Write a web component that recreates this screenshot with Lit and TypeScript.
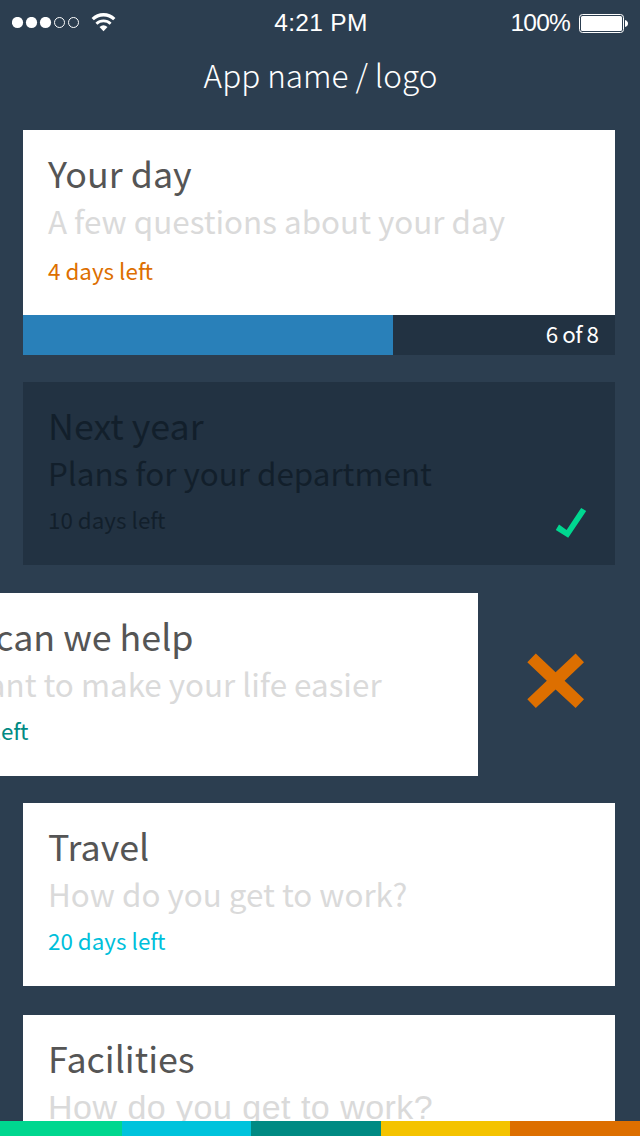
import { LitElement, html, css, nothing } from "lit";
import { customElement, property } from "lit/decorators.js";
import { classMap } from "lit/directives/class-map.js";

@customElement("status-bar")
class StatusBar extends LitElement {
  static styles = css`
    :host {
      display: grid;
      grid-template-columns: 1fr auto 1fr;
      height: 46px;
      padding: 0 12px;
      box-sizing: border-box;
      align-items: center;
      color: #fff;
      font: 24.5px/46px "Liberation Sans", Arial, sans-serif;
    }
    svg {
      display: block;
    }
    .left,
    .right {
      display: flex;
      align-items: center;
    }
    .left {
      gap: 12px;
    }
    .right {
      justify-content: flex-end;
      gap: 9px;
    }
    .time {
      letter-spacing: 0.3px;
      padding-left: 2px;
    }
    .level {
      letter-spacing: -0.8px;
    }
  `;
  render() {
    return html`
      <div class="left">
        <svg width="67" height="12" viewBox="0 0 67 12" fill="#fff">
          <circle cx="5.5" cy="5.5" r="5.6" />
          <circle cx="19.5" cy="5.5" r="5.6" />
          <circle cx="33.5" cy="5.5" r="5.6" />
          <circle cx="47.5" cy="5.5" r="5" fill="none" stroke="#fff" />
          <circle cx="61.5" cy="5.5" r="5" fill="none" stroke="#fff" />
        </svg>
        <svg width="25" height="20" viewBox="0 0 25 20" fill="none" stroke="#fff">
          <path d="M1.7 6.1A15.6 15.6 0 0 1 23.3 6.1" stroke-width="3.3" />
          <path d="M5.4 10.7A10.4 10.4 0 0 1 19.6 10.7" stroke-width="2.8" />
          <path d="M8.5 14Q12.5 10.4 16.5 14L12.5 18.2Z" fill="#fff" stroke="none" />
        </svg>
      </div>
      <span class="time">4:21 PM</span>
      <div class="right">
        <span class="level">100%</span>
        <svg width="49" height="19" viewBox="0 0 49 19">
          <rect x=".5" y=".5" width="44" height="18" rx="3" fill="none" stroke="#fff" />
          <rect x="2" y="2" width="41" height="15" rx="1.5" fill="#fff" />
          <path d="M46 6Q49 7 49 9.5T46 13Z" fill="#fff" />
        </svg>
      </div>
    `;
  }
}

interface Survey {
  title: string;
  subtitle: string;
  days: number;
  tone: string;
  done?: boolean;
  swiped?: boolean;
  plain?: boolean;
  progress?: [number, number];
}

@customElement("survey-card")
class SurveyCard extends LitElement {
  static styles = css`
    :host {
      display: block;
    }
    .row {
      display: flex;
      align-items: center;
    }
    .card {
      position: relative;
      flex: none;
      width: 592px;
      height: 183px;
      padding: 19px 25px 0;
      box-sizing: border-box;
      background: #fff;
      white-space: nowrap;
    }
    .tall {
      height: 184.5px;
    }
    .swiped {
      margin-left: -137px;
      margin-right: 49px;
    }
    .cross {
      margin-bottom: 7px;
    }
    .title {
      font-size: 35.8px;
      line-height: 47px;
      color: #555;
    }
    .subtitle {
      font-size: 31.4px;
      line-height: 50px;
      color: #dadada;
    }
    .plain {
      font-family: "Liberation Sans", Arial, sans-serif;
      font-size: 34px;
      line-height: 53px;
      letter-spacing: 0.48px;
    }
    .left {
      font-size: 22.4px;
      line-height: 43px;
    }
    .tall .left {
      line-height: 48px;
    }
    .join {
      letter-spacing: -0.7px;
    }
    .orange {
      color: #dd6f00;
    }
    .teal {
      color: #008a83;
    }
    .cyan {
      color: #00bfdb;
    }
    .done {
      background: #223242;
    }
    .done div {
      color: #121f2b;
    }
    .check {
      position: absolute;
      right: 28px;
      bottom: 26px;
    }
    .progress {
      display: flex;
      width: 592px;
      height: 40.5px;
      background: #223242;
    }
    .fill {
      background: #2980b9;
    }
    .count {
      flex: 1;
      padding-right: 16.5px;
      text-align: right;
      color: #fff;
      font-size: 22.4px;
      line-height: 37px;
      letter-spacing: -0.5px;
    }
  `;
  @property({ attribute: false }) survey!: Survey;

  render() {
    const s = this.survey;
    return html`
      <div class="row">
        <div class=${classMap({ card: true, done: !!s.done, swiped: !!s.swiped, tall: !!s.progress })}>
          <div class="title">${s.title}</div>
          <div class=${classMap({ subtitle: true, plain: !!s.plain })}>${s.subtitle}</div>
          <div class="left ${s.tone}">${s.days} days le<span class="join">f</span>t</div>
          ${s.done
            ? html`<svg class="check" width="32" height="32" viewBox="0 0 32 32">
                <path d="M4 17.6L11.6 22.9L26.2 .9L31.2 4L13.2 30.8L.8 23Z" fill="#00d790" />
              </svg>`
            : nothing}
        </div>
        ${s.swiped
          ? html`<svg class="cross" width="58" height="56" viewBox="0 0 58 56">
              <path
                d="M.3 9.2L8.8 .5L28.6 19.3L48.6 .5L57 9.2L37.6 27.7L57 46.3L48.6 55L28.6 36.4L8.8 55L.3 46.3L19.8 27.7Z"
                fill="#dd6f00"
              />
            </svg>`
          : nothing}
      </div>
      ${s.progress
        ? html`<div class="progress">
            <div class="fill" style="width:${(s.progress[0] / s.progress[1]) * 100}%"></div>
            <div class="count">6 of 8</div>
          </div>`
        : nothing}
    `;
  }
}

@customElement("app-root")
class AppRoot extends LitElement {
  static styles = css`
    :host {
      display: flex;
      flex-direction: column;
      width: 640px;
      height: 1136px;
      overflow: hidden;
      background: #2c3e50;
      font-family: "Noto Sans CJK SC", "Noto Sans", sans-serif;
    }
    .name {
      flex: none;
      height: 84px;
      padding-left: 1px;
      text-align: center;
      color: #fff;
      font-size: 31.5px;
      font-weight: 200;
      line-height: 56px;
    }
    .list {
      flex: 1;
      min-height: 0;
      overflow: hidden;
      padding-left: 23px;
      display: flex;
      flex-direction: column;
      gap: 27px;
    }
    .wide {
      margin-top: 1px;
    }
    .wider {
      margin-top: 2px;
    }
    .stripes {
      flex: none;
      height: 15px;
      display: grid;
      grid-template-columns: 121.5px 129.5px 129.5px 129.5px 1fr;
    }
    .green {
      background: #00d78f;
    }
    .cyan {
      background: #00c3dc;
    }
    .teal {
      background: #008a83;
    }
    .yellow {
      background: #f4c300;
    }
    .orange {
      background: #dd6f00;
    }
  `;
  render() {
    return html`
      <status-bar></status-bar>
      <div class="name">App name / logo</div>
      <div class="list">
        <survey-card
          .survey=${{ title: "Your day", subtitle: "A few questions about your day", days: 4, tone: "orange", progress: [5, 8] }}
        ></survey-card>
        <survey-card
          .survey=${{ title: "Next year", subtitle: "Plans for your department", days: 10, tone: "", done: true }}
        ></survey-card>
        <survey-card
          class="wide"
          .survey=${{ title: "How can we help", subtitle: "We want to make your life easier", days: 10, tone: "teal", swiped: true }}
        ></survey-card>
        <survey-card
          .survey=${{ title: "Travel", subtitle: "How do you get to work?", days: 20, tone: "cyan" }}
        ></survey-card>
        <survey-card
          class="wider"
          .survey=${{ title: "Facilities", subtitle: "How do you get to work?", days: 20, tone: "cyan", plain: true }}
        ></survey-card>
      </div>
      <div class="stripes">
        <div class="green"></div>
        <div class="cyan"></div>
        <div class="teal"></div>
        <div class="yellow"></div>
        <div class="orange"></div>
      </div>
    `;
  }
}
